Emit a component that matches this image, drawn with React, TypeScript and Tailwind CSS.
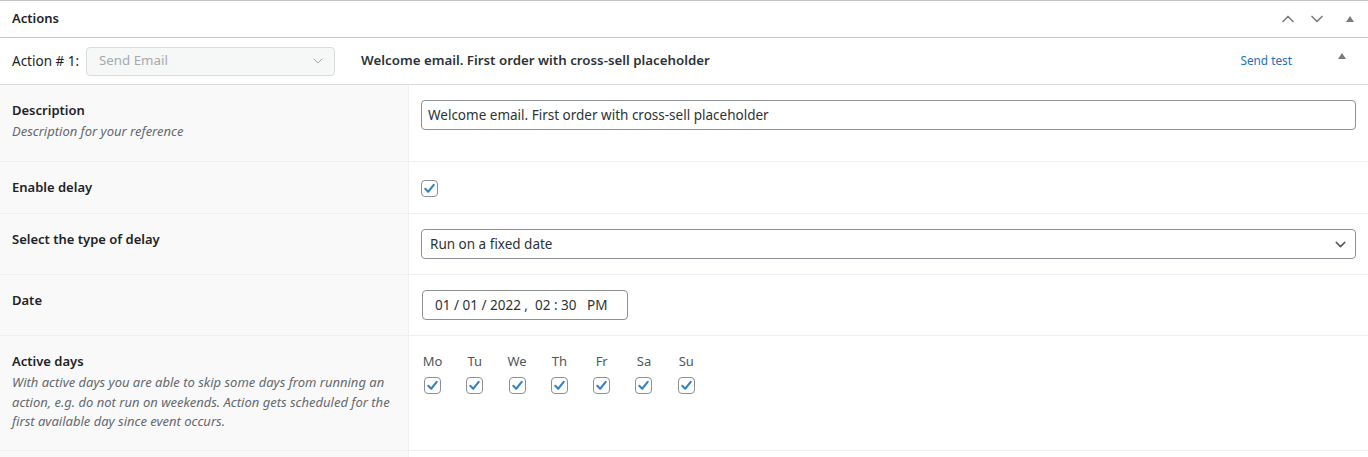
import { ChevronDown, ChevronUp } from 'lucide-react';

const FONT = { fontFamily: '"Noto Sans", "Open Sans", sans-serif' };

const Check = ({ className = '' }: { className?: string }) => (
  <span
    className={`inline-flex h-[17px] w-[17px] items-center justify-center rounded-[4px] border border-[#8c8f94] bg-white ${className}`}
  >
    <svg width="13" height="13" viewBox="0 0 20 20">
      <path
        d="M3.5 10.5 L8 15 L16.5 4.5"
        fill="none"
        stroke="#3582c4"
        strokeWidth="3.2"
        strokeLinecap="round"
        strokeLinejoin="round"
      />
    </svg>
  </span>
);

const Triangle = () => (
  <svg width="10" height="8" viewBox="0 0 10 8">
    <path d="M5 1 L9 7 L1 7 Z" fill="#787c82" />
  </svg>
);

const DAYS = ['Mo', 'Tu', 'We', 'Th', 'Fr', 'Sa', 'Su'];

const Row = ({
  label,
  hint,
  children,
  className = '',
}: {
  label: string;
  hint?: string;
  children: React.ReactNode;
  className?: string;
}) => (
  <div className={`flex border-b border-[#f0f0f1] ${className}`}>
    <div className="w-[409px] shrink-0 border-r border-[#f0f0f1] bg-[#f9f9f9] px-3 pt-[15px] pb-4">
      <div className="text-[13px] font-semibold leading-[20px] text-[#1d2327]">{label}</div>
      {hint && (
        <div className="mt-[2px] text-[13px] italic leading-[19.5px] text-[#646970]">{hint}</div>
      )}
    </div>
    <div className="flex-1 px-3 pt-[15px]">{children}</div>
  </div>
);

export default function App() {
  return (
    <div className="min-h-[457px] bg-white text-[#1d2327]" style={FONT}>
      <div className="border-t border-[#c3c4c7]">
        {/* header */}
        <div className="flex h-[37px] items-center border-b border-[#c3c4c7] px-3">
          <h2 className="flex-1 text-[13px] font-semibold">Actions</h2>
          <div className="flex items-center gap-[9px] pr-[1px] text-[#787c82]">
            <ChevronUp size={20} strokeWidth={2} />
            <ChevronDown size={20} strokeWidth={2} />
            <span className="ml-[9px]">
              <Triangle />
            </span>
          </div>
        </div>

        {/* action title */}
        <div className="flex h-[47px] items-center border-b border-[#dcdcde] pl-3">
          <span className="text-[13.5px] text-[#1d2327]">Action # 1:</span>
          <div className="ml-[7px] flex h-[29px] w-[249px] items-center justify-between rounded-[4px] border border-[#dcdcde] bg-[#f6f7f7] pl-3 pr-2 text-[13.3px] text-[#a7aaad]">
            <span>Send Email</span>
            <ChevronDown size={16} strokeWidth={1.5} className="text-[#a7aaad]" />
          </div>
          <span className="ml-[26px] flex-1 text-[13.3px] font-semibold text-[#2c3338]">
            Welcome email. First order with cross-sell placeholder
          </span>
          <span className="mr-[45px] text-[11.8px] text-[#2271b1]">Send test</span>
          <span className="mr-[21px] -mt-[10px]">
            <Triangle />
          </span>
        </div>

        {/* fields */}
        <Row label="Description" hint="Description for your reference" className="h-[77px]">
          <div className="flex h-[30px] items-center rounded-[4px] border border-[#8c8f94] px-[6px] text-[13.5px] text-[#2c3338]">
            Welcome email. First order with cross-sell placeholder
          </div>
        </Row>
        <Row label="Enable delay" className="h-[52px]">
          <Check className="mt-[2px]" />
        </Row>
        <Row label="Select the type of delay" className="h-[61px]">
          <div className="flex h-[30px] items-center justify-between rounded-[4px] border border-[#8c8f94] pl-2 pr-[6px] text-[13.5px] text-[#2c3338]">
            <span>Run on a fixed date</span>
            <ChevronDown size={17} strokeWidth={2} className="text-[#50575e]" />
          </div>
        </Row>
        <Row label="Date" className="h-[61px]">
          <div className="ml-px flex h-[30px] w-[206px] items-center rounded-[4px] border border-[#8c8f94] pl-[12px] text-[13.5px] text-[#2c3338] whitespace-pre">
            01 / 01 / 2022 ,  02 : 30   PM
          </div>
        </Row>
        <Row
          label="Active days"
          hint="With active days you are able to skip some days from running an action, e.g. do not run on weekends. Action gets scheduled for the first available day since event occurs."
          className="h-[115px]"
        >
          <div className="flex gap-[25.3px] pl-[3px]">
            {DAYS.map((d) => (
              <div key={d} className="flex w-[17px] flex-col items-center">
                <span className="text-[13px] leading-[20px] text-[#50575e]">{d}</span>
                <Check className="mt-[6px]" />
              </div>
            ))}
          </div>
        </Row>
        <div className="flex h-[10px]">
          <div className="w-[409px] border-r border-[#f0f0f1] bg-[#f9f9f9]" />
        </div>
      </div>
    </div>
  );
}
